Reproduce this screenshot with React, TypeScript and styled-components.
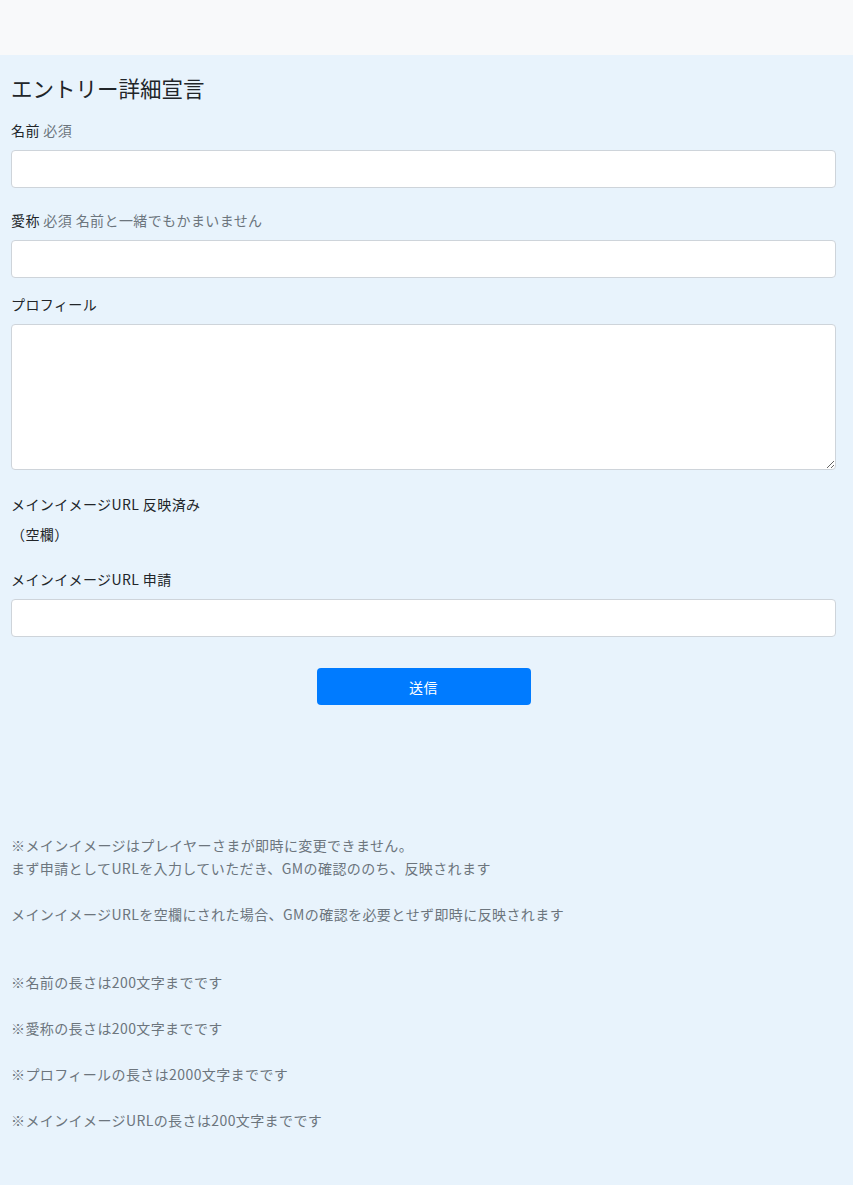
import React, { useState } from "react";
import styled, { createGlobalStyle } from "styled-components";

const GlobalStyle = createGlobalStyle`
  html, body {
    margin: 0;
    padding: 0;
    background: #e8f3fc;
    min-height: 100%;
  }
  body {
    font-family: "Noto Sans CJK JP", "Noto Sans", sans-serif;
    font-size: 14px;
    letter-spacing: 0.4px;
    color: #212529;
  }
  * {
    box-sizing: border-box;
  }
`;

const Page = styled.div`
  min-height: 1185px;
  background: #e8f3fc;
`;

const Header = styled.header`
  height: 55px;
  background: #f8f9fa;
`;

const Main = styled.main`
  padding: 20px 17px 40px 11px;
`;

const Title = styled.h2`
  margin: 0 0 19px;
  font-size: 21.5px;
  font-weight: 400;
  line-height: 26px;
  letter-spacing: 0;
  color: #212529;
`;

const StyledForm = styled.form`
  display: flex;
  flex-direction: column;
`;

const Group = styled.div<{ $space: number }>`
  display: flex;
  flex-direction: column;
  margin-bottom: ${(p) => p.$space}px;
`;

const Label = styled.label<{ $tight?: boolean }>`
  font-size: 14px;
  line-height: 21px;
  margin-bottom: ${(p) => (p.$tight ? 0 : 9)}px;
  color: #212529;
`;

const Hint = styled.span`
  color: #6c757d;
`;

const Input = styled.input`
  height: 38px;
  padding: 6px 12px;
  border-radius: 4px;
  border: 1px solid #ced4da;
  background: #fff;
  font-size: 14px;
  font-family: inherit;
  outline: none;
`;

const Textarea = styled.textarea`
  height: 146px;
  padding: 6px 12px;
  border-radius: 4px;
  border: 1px solid #ced4da;
  background: #fff;
  font-size: 14px;
  font-family: inherit;
  outline: none;
`;

const Current = styled.div`
  line-height: 21px;
  margin-top: 9px;
`;

const ButtonRow = styled.div`
  display: flex;
  justify-content: center;
`;

const Button = styled.button`
  width: 214px;
  height: 37px;
  background: #007bff;
  color: #fff;
  border: none;
  border-radius: 4px;
  font-size: 14px;
  font-family: inherit;
  letter-spacing: 0.4px;
  cursor: pointer;
`;

const Notes = styled.div`
  margin-top: 129px;
  color: #6c757d;
  font-size: 14px;
  line-height: 22.9px;
`;

const App: React.FC = () => {
  const [name, setName] = useState<string>("");
  const [nick, setNick] = useState<string>("");
  const [profile, setProfile] = useState<string>("");
  const [url, setUrl] = useState<string>("");

  return (
    <Page>
      <GlobalStyle />
      <Header />
      <Main>
        <Title>エントリー詳細宣言</Title>
        <StyledForm onSubmit={(e) => e.preventDefault()}>
          <Group $space={22}>
            <Label>
              名前 <Hint>必須</Hint>
            </Label>
            <Input type="text" value={name} onChange={(e) => setName(e.target.value)} />
          </Group>
          <Group $space={16}>
            <Label>
              愛称 <Hint>必須 名前と一緒でもかまいません</Hint>
            </Label>
            <Input type="text" value={nick} onChange={(e) => setNick(e.target.value)} />
          </Group>
          <Group $space={24}>
            <Label>プロフィール</Label>
            <Textarea value={profile} onChange={(e) => setProfile(e.target.value)} />
          </Group>
          <Group $space={24}>
            <Label as="div" $tight>
              メインイメージURL 反映済み
            </Label>
            <Current>（空欄）</Current>
          </Group>
          <Group $space={31}>
            <Label>メインイメージURL 申請</Label>
            <Input type="text" value={url} onChange={(e) => setUrl(e.target.value)} />
          </Group>
          <ButtonRow>
            <Button type="submit">送信</Button>
          </ButtonRow>
        </StyledForm>
        <Notes>
          ※メインイメージはプレイヤーさまが即時に変更できません。
          <br />
          まず申請としてURLを入力していただき、GMの確認ののち、反映されます
          <br />
          <br />
          メインイメージURLを空欄にされた場合、GMの確認を必要とせず即時に反映されます
          <br />
          <br />
          <br />
          ※名前の長さは200文字までです
          <br />
          <br />
          ※愛称の長さは200文字までです
          <br />
          <br />
          ※プロフィールの長さは2000文字までです
          <br />
          <br />
          ※メインイメージURLの長さは200文字までです
        </Notes>
      </Main>
    </Page>
  );
};

export default App;
